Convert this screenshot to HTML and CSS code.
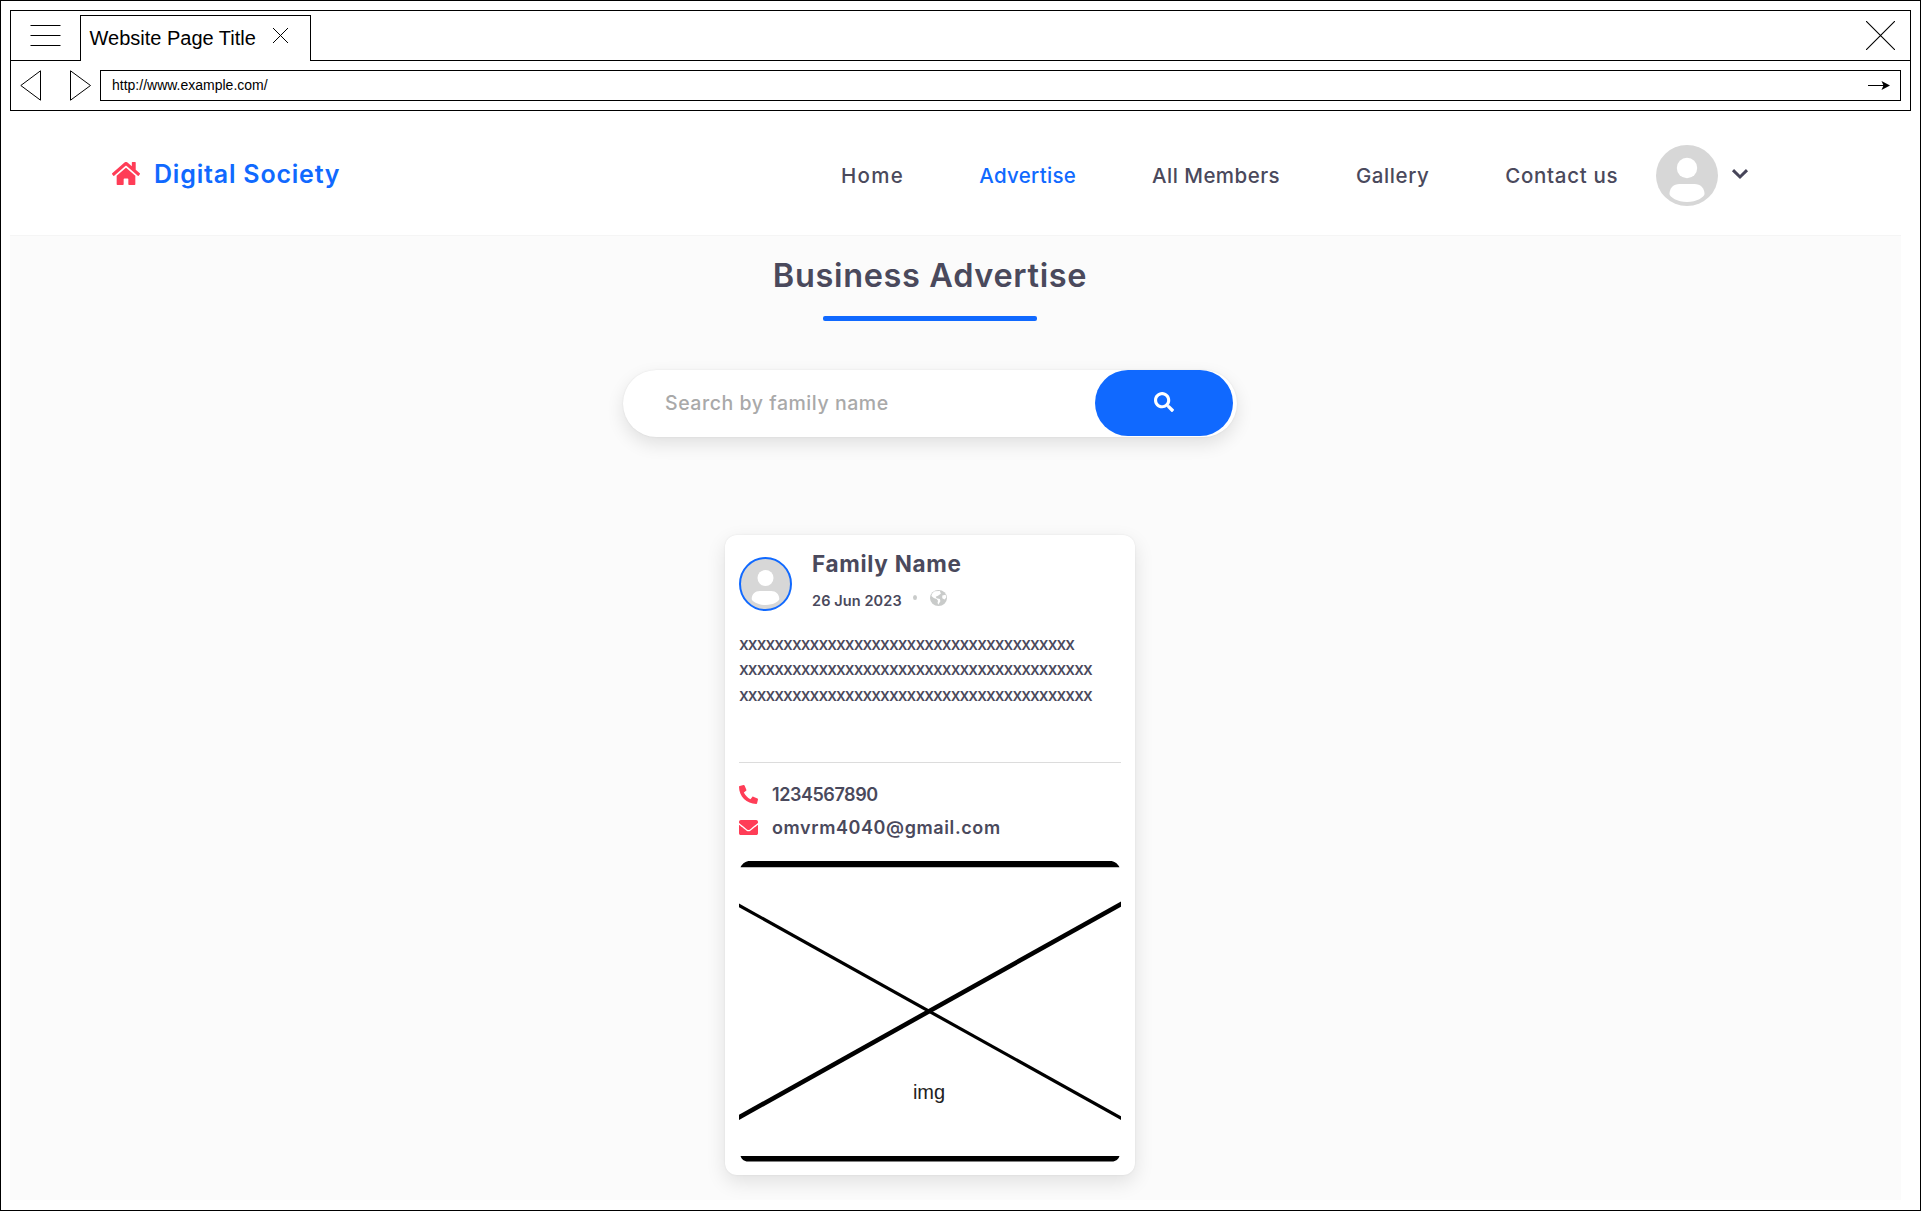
FILE: index.html
```html
<!DOCTYPE html>
<html lang="en">
<head>
<meta charset="utf-8">
<title>Digital Society</title>
<link rel="stylesheet" href="styles.css">
</head>
<body>
<div class="window">
  <div class="browser">
    <div class="tabbar">
      <div class="tab-start"><svg class="menu" width="31" height="21"><path d="M.5 .5h30M.5 10.500h30M.5 20.500h30" stroke="#000"/></svg></div>
      <div class="tab"><span>Website Page Title</span><svg class="tab-close" width="15" height="15"><path d="M0 0l15 15M15 0L0 15" stroke="#000"/></svg></div>
      <div class="tab-end"><svg width="29" height="29"><path d="M0 0l29 29M29 0L0 29" stroke="#000" stroke-width="1.100"/></svg></div>
    </div>
    <div class="toolbar">
      <svg class="arrows" width="72" height="31" fill="none" stroke="#000"><path d="M20.500 .8v29.400L.8 15.500zM50.500 .8v29.400L70.500 15.500z"/></svg>
      <div class="address"><span>http://www.example.com/</span><svg width="22" height="9"><path d="M0 4.500h16" stroke="#000"/><path d="M13.500 0L22 4.500 13.500 9l2-4.500z"/></svg></div>
    </div>
  </div>

  <header class="header">
    <a class="brand">
      <svg class="home" viewBox="0 32 576 448" preserveAspectRatio="none"><path d="M280.370 148.260L96 300.110V464a16 16 0 0 0 16 16l112.060-.29a16 16 0 0 0 15.920-16V368a16 16 0 0 1 16-16h64a16 16 0 0 1 16 16v95.640a16 16 0 0 0 16 16.050L464 480a16 16 0 0 0 16-16V300L295.670 148.260a12.190 12.190 0 0 0-15.300 0zM571.600 251.470L488 182.560V44.050a12 12 0 0 0-12-12h-56a12 12 0 0 0-12 12v72.610L318.470 43a48 48 0 0 0-61 0L4.340 251.470a12 12 0 0 0-1.600 16.900l25.500 31A12 12 0 0 0 45.150 301l235.220-193.740a12.190 12.190 0 0 1 15.300 0L530.900 301a12 12 0 0 0 16.900-1.600l25.500-31a12 12 0 0 0-1.700-16.930z"/></svg>
      <span>Digital Society</span>
    </a>
    <nav class="nav">
      <a class="n-home">Home</a>
      <a class="n-ads active">Advertise</a>
      <a class="n-members">All Members</a>
      <a class="n-gallery">Gallery</a>
      <a class="n-contact">Contact us</a>
    </nav>
    <svg class="user" viewBox="0 0 62 61"><ellipse cx="31" cy="30.500" rx="31" ry="30.500" fill="#d7d7d7"/><circle cx="31" cy="23" r="10.200" fill="#fff"/><path d="M13.500 49c0-6 4-10 10-10h15c6 0 10 4 10 10 0 3-8 8-17.500 8s-17.500-5-17.500-8z" fill="#fff"/></svg>
    <svg class="chevron" width="18" height="12"><path d="M2 2.200l7 6.800 7-6.800" fill="none" stroke="#474559" stroke-width="3"/></svg>
  </header>

  <main class="content">
    <h1>Business Advertise</h1>
    <div class="underline"></div>
    <div class="search">
      <span>Search by family name</span>
      <button class="search-btn" aria-label="Search"><svg viewBox="0 0 512 512" width="20" height="20" preserveAspectRatio="none"><path fill="#fff" d="M505 442.700L405.300 343c-4.500-4.500-10.600-7-17-7H372c27.600-35.300 44-79.700 44-128C416 93.100 322.900 0 208 0S0 93.100 0 208s93.100 208 208 208c48.300 0 92.700-16.400 128-44v16.300c0 6.400 2.500 12.500 7 17l99.700 99.700c9.400 9.400 24.600 9.400 33.900 0l28.300-28.300c9.400-9.400 9.400-24.600.1-34zM208 336c-70.700 0-128-57.200-128-128 0-70.700 57.200-128 128-128 70.700 0 128 57.200 128 128 0 70.700-57.200 128-128 128z"/></svg></button>
    </div>

    <article class="card">
      <div class="card-head">
        <svg class="avatar" viewBox="0 0 53 54"><ellipse cx="26.500" cy="27" rx="25.500" ry="26" fill="#d7d7d7" stroke="#1069ff" stroke-width="2"/><circle cx="26.500" cy="21" r="8" fill="#fff"/><path d="M12.700 42c0-5 3.500-8 8-8h11.600c4.500 0 8 3 8 8 0 2-5.500 6-13.800 6s-13.800-4-13.800-6z" fill="#fff"/></svg>
        <div>
          <h2>Family Name</h2>
          <div class="meta"><span>26 Jun 2023</span><i class="dot"></i>
            <svg class="globe" viewBox="0 0 18 16" preserveAspectRatio="none"><ellipse cx="9" cy="8" rx="9" ry="8" fill="#c9cbca"/><path d="M5 1.300C3 2.300 1.800 4 1.500 6l2.500 2 3 1 1.500 1.800-.5 2 .7 2 2.300-3.500-.5-2.300-3.500-.7-1-1.500 2-.8 3.500-2.200L10.500 1zM13 5.500l3.600-.8.6 2.800-1.700 2-2.500-1.300z" fill="#fff"/></svg></div>
        </div>
      </div>
      <p class="text">xxxxxxxxxxxxxxxxxxxxxxxxxxxxxxxxxxxxxx<br>xxxxxxxxxxxxxxxxxxxxxxxxxxxxxxxxxxxxxxxx<br>xxxxxxxxxxxxxxxxxxxxxxxxxxxxxxxxxxxxxxxx</p>
      <hr>
      <div class="contact">
        <svg viewBox="0 0 512 512" width="19" height="19"><path transform="matrix(-1 0 0 1 512 0)" d="M493.400 24.600l-104-24c-11.300-2.600-22.900 3.300-27.500 13.900l-48 112c-4.200 9.800-1.400 21.300 6.900 28l60.600 49.600c-36 76.700-98.900 140.500-177.200 177.200l-49.600-60.600c-6.800-8.300-18.200-11.100-28-6.900l-112 48C3.900 366.500-2 378.100.6 389.400l24 104C27.100 504.200 36.700 512 48 512c256.100 0 464-207.500 464-464 0-11.200-7.700-20.900-18.600-23.400z"/></svg>
        <span class="phone">1234567890</span>
      </div>
      <div class="contact">
        <svg viewBox="0 64 512 384" width="19" height="15" preserveAspectRatio="none"><path d="M502.300 190.800c3.900-3.100 9.700-.2 9.700 4.700V400c0 26.500-21.500 48-48 48H48c-26.500 0-48-21.500-48-48V195.600c0-5 5.700-7.800 9.700-4.700 22.400 17.400 52.100 39.500 154.100 113.600 21.100 15.400 56.700 47.800 92.200 47.600 35.700.3 72-32.800 92.300-47.600 102-74.100 131.600-96.300 154-113.700zM256 320c23.200.4 56.600-29.200 73.400-41.400 132.700-96.300 142.800-104.700 173.400-128.700 5.800-4.500 9.200-11.500 9.200-18.900v-19c0-26.500-21.500-48-48-48H48c-26.500 0-48 21.500-48 48v19c0 7.400 3.400 14.300 9.200 18.900 30.600 23.900 40.700 32.400 173.400 128.700 16.800 12.200 50.200 41.800 73.400 41.400z"/></svg>
        <span class="email">omvrm4040@gmail.com</span>
      </div>
      <svg class="picture" width="382" height="301"><path d="M1.500 6.200C3.500 2.500 6.500 0 11 0h360c4.500 0 7.500 2.500 9.500 6.200zM1.500 295C2.500 298 5 300.500 9 300.500h364c4 0 6.500-2.500 7.500-5.500z"/><path d="M-2 43.200L384 258.300" stroke="#000" stroke-width="3.200"/><path d="M-2 257.500L384 42" stroke="#000" stroke-width="4.600"/><text x="190" y="238" text-anchor="middle" fill="#222">img</text></svg>
    </article>
  </main>
</div>
</body>
</html>
```
FILE: styles.css
```css
* { box-sizing: border-box; }
body { margin: 0; background: #fff; font-family: Inter, "Open Sans", sans-serif; color: #4a495c; }
h1, h2, p { margin: 0; }
svg { display: block; flex: none; }
.window { width: 1921px; height: 1211px; border: 1px solid #000; padding: 9px; overflow: hidden; }

/* Browser chrome */
.browser { height: 101px; border: 1px solid #000; color: #000; font-family: "Liberation Sans", Arial, sans-serif; }
.tabbar { display: flex; height: 50px; }
.tab-start { width: 69px; border-bottom: 1px solid #000; padding: 14px 0 0 19px; }
.tab { width: 231px; margin-top: 4px; border: 1px solid #000; border-bottom: 0; display: flex; padding-left: 8.5px; font-size: 20px; line-height: 44px; white-space: nowrap; }
.tab-close { margin: 12px 0 0 17.5px; }
.tab-end { flex: 1; border-bottom: 1px solid #000; display: flex; justify-content: flex-end; padding: 10px 15px 0 0; }
.toolbar { display: flex; padding: 9px 9px 0 9px; }
.arrows { margin-right: 8px; }
.address { flex: 1; height: 31px; border: 1px solid #000; display: flex; align-items: center; justify-content: space-between; padding: 0 10px 0 11px; font-size: 14px; line-height: 29px; }

/* Site header */
.header { height: 124px; display: flex; align-items: flex-start; padding-left: 102px; white-space: nowrap; }
.brand { display: flex; width: 729px; color: #1069ff; font-size: 25px; font-weight: 600; line-height: 40px; letter-spacing: .8px; padding-top: 43px; }
.home { width: 28px; height: 23px; margin: 8px 14px 0 0; fill: #ff3d57; }
.nav { display: flex; gap: 77.3px; padding-top: 45px; font-size: 20.5px; font-weight: 500; line-height: 40px; }
.n-home { width: 61px; letter-spacing: 1.3px; }
.n-ads { width: 95.5px; letter-spacing: .3px; }
.n-members { width: 126.5px; letter-spacing: .45px; }
.n-gallery { width: 72px; letter-spacing: .6px; }
.n-contact { width: 112px; letter-spacing: .7px; }
.nav .active { color: #1069ff; }
.user { width: 62px; height: 61px; margin: 34px 0 0 39px; }
.chevron { margin: 57px 0 0 13px; }

/* Page content */
.content { width: 1891px; height: 965px; background: #fbfbfb; border-top: 1px solid #f5f5f5; padding: 20px 51px 0 0; display: flex; flex-direction: column; align-items: center; overflow: hidden; }
h1 { font-size: 32.5px; font-weight: 600; line-height: 40px; letter-spacing: .65px; }
.underline { width: 214px; height: 5px; margin-top: 20px; border-radius: 2px; background: #1069ff; flex: none; }
.search { width: 614px; height: 67px; margin-top: 49px; border-radius: 34px; background: #fff; box-shadow: 0 7px 18px rgba(0,0,0,.11), 0 0 2px rgba(0,0,0,.08); display: flex; justify-content: space-between; padding: 0 4px 0 42px; font-size: 19.5px; font-weight: 500; line-height: 67px; letter-spacing: .55px; color: #a9a9a9; flex: none; }
.search-btn { width: 138px; height: 66px; border: 0; border-radius: 33px; background: #1069ff; display: flex; align-items: center; justify-content: center; padding: 0 0 3px; }
.card { width: 410px; height: 640px; margin-top: 98px; padding: 0 14px; border-radius: 12px; background: #fff; box-shadow: 0 7px 20px rgba(0,0,0,.11), 0 0 2px rgba(0,0,0,.08); flex: none; }
.card-head { display: flex; height: 96px; }
.avatar { width: 53px; height: 54px; margin: 22px 20px 0 0; }
h2 { margin-top: 14px; font-size: 22.5px; font-weight: 700; line-height: 30px; letter-spacing: .7px; }
.meta { display: flex; margin-top: 12px; font-size: 14.5px; font-weight: 600; line-height: 20px; letter-spacing: .1px; }
.dot { width: 4px; height: 5px; margin: 4px 13px 0 11px; border-radius: 50%; background: #c9cbca; }
.globe { width: 17px; height: 16px; margin-top: -1px; }
.text { font-size: 17.5px; font-weight: 500; line-height: 25.3px; letter-spacing: -.93px; height: 76px; white-space: nowrap; }
hr { height: 1px; margin: 55px 0 15px; border: 0; background: #dcdcdc; }
.contact { display: flex; align-items: center; gap: 14px; height: 33px; font-size: 18px; font-weight: 600; line-height: 33px; }
.contact svg { fill: #ff3d57; }
.phone { letter-spacing: -.45px; }
.email { letter-spacing: .6px; }
.picture { margin-top: 17px; }
.picture text { font: 20px "Liberation Sans", Arial, sans-serif; }
```
